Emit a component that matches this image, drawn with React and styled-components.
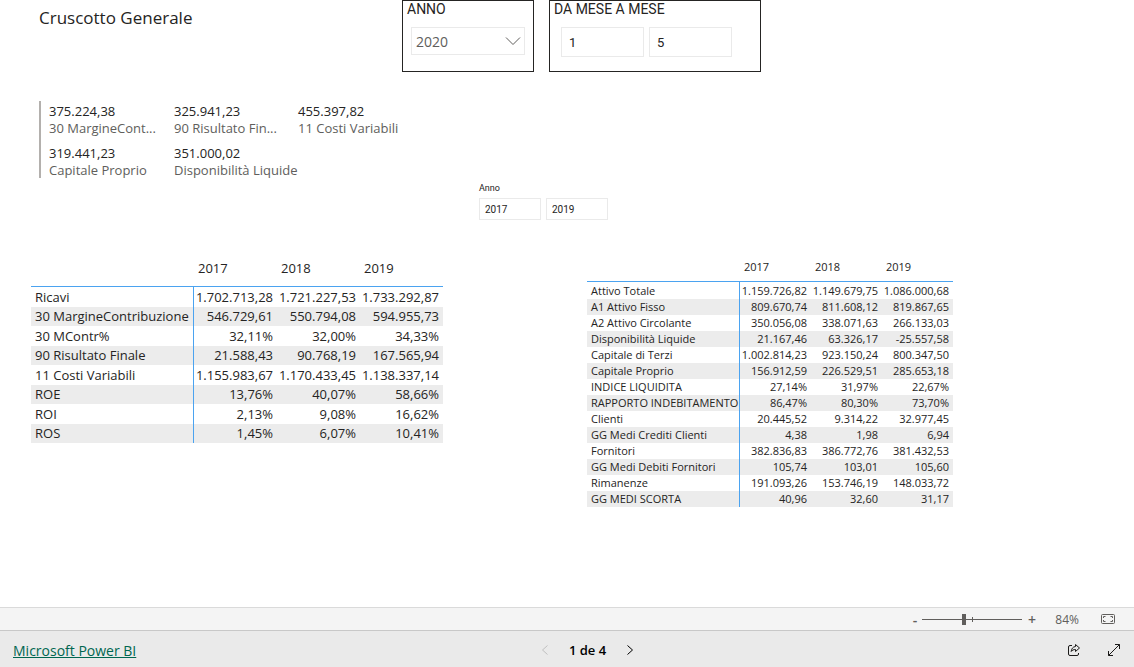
import React from 'react';
import styled, { createGlobalStyle } from 'styled-components';

const GlobalStyle = createGlobalStyle`
  * {
    box-sizing: border-box;
  }

  body {
    margin: 0;
    background: #fff;
    color: #252423;
    font-family: 'Open Sans', 'Noto Sans', sans-serif;
    font-size: 13px;
  }

  input,
  select,
  button {
    font: inherit;
    color: inherit;
  }
`;

const Page = styled.div`
  display: flex;
  flex-direction: column;
  min-height: 100vh;
`;

const Report = styled.main`
  flex: 1;
`;

const TopRow = styled.header`
  display: grid;
  grid-template-columns: 348px 132px 212px;
  column-gap: 15px;
  padding-left: 39px;
`;

const Title = styled.h1`
  margin: 0;
  padding-top: 6px;
  font-size: 17px;
  line-height: 24px;
  font-weight: 400;
`;

const FilterBox = styled.section`
  height: 72px;
  padding: 0 8px;
  border: 1px solid #252423;
`;

const FilterTitle = styled.h2`
  display: block;
  margin: 0 -4px;
  font-family: Roboto, sans-serif;
  font-size: 14px;
  line-height: 16px;
  font-weight: 400;
`;

const SelectWrap = styled.div`
  display: grid;
  align-items: center;
  margin-top: 10px;
  color: #605e5c;

  select,
  svg {
    grid-area: 1 / 1;
  }

  svg {
    justify-self: end;
    margin-right: 4px;
    pointer-events: none;
  }
`;

const Select = styled.select`
  appearance: none;
  width: 100%;
  height: 28px;
  padding: 0 4px;
  border: 1px solid #eaeaea;
  border-radius: 0;
  background: #fff;
  font-size: 14px;
`;

const RangeInputs = styled.div`
  display: flex;
  gap: 5px;
  padding: ${(p) => (p.$small ? '0' : '10px 3px 0')};
`;

const NumberBox = styled.input`
  width: ${(p) => (p.$small ? '62px' : '83px')};
  height: ${(p) => (p.$small ? '22px' : '30px')};
  padding: 0 ${(p) => (p.$small ? '5px' : '7px')};
  border: 1px solid #eaeaea;
  background: #fff;
  font-family: Roboto, sans-serif;
  font-size: ${(p) => (p.$small ? '10px' : '13px')};
`;

const MiddleRow = styled.div`
  display: grid;
  grid-template-columns: 440px auto;
  justify-content: start;
  padding: 29px 0 0 39px;
`;

const Cards = styled.dl`
  display: grid;
  grid-template-columns: 125px 124px 124px;
  grid-auto-rows: 42px;
  height: 77px;
  margin: 0;
  padding-left: 8px;
  border-left: 2px solid #b3b0ad;
`;

const Card = styled.div`
  display: flex;
  flex-direction: column-reverse;
  justify-content: flex-end;
  padding-top: 2px;
`;

const CardValue = styled.dd`
  margin: 0;
  line-height: 17px;
`;

const CardLabel = styled.dt`
  color: #605e5c;
  line-height: 16px;
  white-space: nowrap;
`;

const YearSlicer = styled.section`
  padding-top: 81px;
`;

const SlicerTitle = styled.h2`
  margin: 0 0 4px;
  font-family: Roboto, sans-serif;
  font-size: 9px;
  line-height: 12px;
  font-weight: 400;
`;

const Tables = styled.div`
  display: grid;
  grid-template-columns: auto auto;
  justify-content: start;
  align-items: start;
  gap: 30px 144px;
  padding: 30px 31px;
`;

const Matrix = styled.table`
  width: ${(p) => (p.$dense ? '366px' : '412px')};
  border-collapse: separate;
  border-spacing: 0;
  table-layout: fixed;
  font-size: ${(p) => (p.$dense ? '11px' : '13px')};
  white-space: nowrap;

  col:not(:first-child) {
    width: ${(p) => (p.$dense ? '71px' : '83px')};
  }

  th,
  td {
    padding: 0 4px;
    font-weight: 400;
    text-align: right;
    line-height: ${(p) => (p.$dense ? '16px' : '19px')};
  }

  td {
    padding-left: 0;
  }

  thead th {
    height: ${(p) => (p.$dense ? '32px' : '37px')};
    padding: ${(p) => (p.$dense ? '3px 4px 0' : '1px 4px 0')};
    border-bottom: 1px solid #4ba3f0;
    text-align: left;
  }

  tbody th {
    padding-right: 0;
    border-right: 1px solid #4ba3f0;
    text-align: left;
  }

  tbody tr:nth-child(odd) > * {
    line-height: ${(p) => (p.$dense ? '16px' : '20px')};
  }

  tbody tr:nth-child(even) > * {
    background: #ececec;
  }

  tbody tr:first-child > * {
    padding-top: ${(p) => (p.$dense ? '1px' : '0')};
  }
`;

const ZoomBar = styled.div`
  display: flex;
  align-items: center;
  justify-content: flex-end;
  height: 24px;
  padding-right: 16px;
  border-top: 1px solid #dadada;
  border-bottom: 1px solid #c8c8c8;
  background: #f4f4f4;
  color: #605e5c;
  font-size: 12px;
`;

const PlainButton = styled.button`
  display: flex;
  align-items: center;
  justify-content: center;
  width: ${(p) => p.$width || 20}px;
  height: 20px;
  padding: 0;
  border: 0;
  background: none;
  font-size: 14px;
  font-weight: 600;

  &:disabled {
    color: #c0c0c0;
  }
`;

const ZoomSlider = styled.input`
  appearance: none;
  width: 100px;
  height: 11px;
  margin: 0;
  background:
    linear-gradient(#605e5c, #605e5c) center / 1px 5px no-repeat,
    linear-gradient(#605e5c, #605e5c) center / 100% 1px no-repeat;

  &::-webkit-slider-thumb {
    appearance: none;
    width: 4px;
    height: 11px;
    background: #605e5c;
  }
`;

const ZoomValue = styled.span`
  width: 37px;
  margin-right: 19px;
  text-align: right;
`;

const Footer = styled.footer`
  display: grid;
  grid-template-columns: 1fr auto 1fr;
  align-items: center;
  height: 36px;
  padding: 2px 10px 0 13px;
  background: #eaeaea;
`;

const BrandLink = styled.a`
  justify-self: start;
  color: #006650;
  font-size: 14px;
`;

const Pager = styled.nav`
  display: flex;
  align-items: center;
  gap: 14px;
  padding-left: 38px;
  color: #000;
  font-size: 13px;
  font-weight: 600;
`;

const Actions = styled.div`
  display: flex;
  justify-content: flex-end;
  gap: 20px;
  color: #1b1a19;
`;

const cards = [
  ['375.224,38', '30 MargineCont...'],
  ['325.941,23', '90 Risultato Fin...'],
  ['455.397,82', '11 Costi Variabili'],
  ['319.441,23', 'Capitale Proprio'],
  ['351.000,02', 'Disponibilità Liquide'],
];

const years = ['2017', '2018', '2019'];

const income = [
  ['Ricavi', '1.702.713,28', '1.721.227,53', '1.733.292,87'],
  ['30 MargineContribuzione', '546.729,61', '550.794,08', '594.955,73'],
  ['30 MContr%', '32,11%', '32,00%', '34,33%'],
  ['90 Risultato Finale', '21.588,43', '90.768,19', '167.565,94'],
  ['11 Costi Variabili', '1.155.983,67', '1.170.433,45', '1.138.337,14'],
  ['ROE', '13,76%', '40,07%', '58,66%'],
  ['ROI', '2,13%', '9,08%', '16,62%'],
  ['ROS', '1,45%', '6,07%', '10,41%'],
];

const balance = [
  ['Attivo Totale', '1.159.726,82', '1.149.679,75', '1.086.000,68'],
  ['A1 Attivo Fisso', '809.670,74', '811.608,12', '819.867,65'],
  ['A2 Attivo Circolante', '350.056,08', '338.071,63', '266.133,03'],
  ['Disponibilità Liquide', '21.167,46', '63.326,17', '-25.557,58'],
  ['Capitale di Terzi', '1.002.814,23', '923.150,24', '800.347,50'],
  ['Capitale Proprio', '156.912,59', '226.529,51', '285.653,18'],
  ['INDICE LIQUIDITA', '27,14%', '31,97%', '22,67%'],
  ['RAPPORTO INDEBITAMENTO', '86,47%', '80,30%', '73,70%'],
  ['Clienti', '20.445,52', '9.314,22', '32.977,45'],
  ['GG Medi Crediti Clienti', '4,38', '1,98', '6,94'],
  ['Fornitori', '382.836,83', '386.772,76', '381.432,53'],
  ['GG Medi Debiti Fornitori', '105,74', '103,01', '105,60'],
  ['Rimanenze', '191.093,26', '153.746,19', '148.033,72'],
  ['GG MEDI SCORTA', '40,96', '32,60', '31,17'],
];

const Icon = ({ width = 14, height = 14, children }) => (
  <svg
    width={width}
    height={height}
    viewBox={`0 0 ${width} ${height}`}
    fill="none"
    stroke="currentColor"
    aria-hidden="true"
  >
    {children}
  </svg>
);

const DataMatrix = ({ rows, dense }) => (
  <Matrix $dense={dense}>
    <colgroup>
      <col />
      {years.map((year) => <col key={year} />)}
    </colgroup>
    <thead>
      <tr>
        <th aria-label="Voce" />
        {years.map((year) => <th key={year} scope="col">{year}</th>)}
      </tr>
    </thead>
    <tbody>
      {rows.map(([label, ...values]) => (
        <tr key={label}>
          <th scope="row">{label}</th>
          {values.map((value, i) => <td key={years[i]}>{value}</td>)}
        </tr>
      ))}
    </tbody>
  </Matrix>
);

export default function App() {
  return (
    <Page>
      <GlobalStyle />
      <Report>
        <TopRow>
          <Title>Cruscotto Generale</Title>
          <FilterBox>
            <FilterTitle as="label" htmlFor="anno">ANNO</FilterTitle>
            <SelectWrap>
              <Select id="anno" defaultValue="2020">
                <option>2020</option>
                <option>2019</option>
                <option>2018</option>
                <option>2017</option>
              </Select>
              <Icon width={16} height={10}><path d="M1 1.5 8 8.5 15 1.5" /></Icon>
            </SelectWrap>
          </FilterBox>
          <FilterBox>
            <FilterTitle>DA MESE A MESE</FilterTitle>
            <RangeInputs>
              <NumberBox aria-label="Da mese" defaultValue="1" />
              <NumberBox aria-label="A mese" defaultValue="5" />
            </RangeInputs>
          </FilterBox>
        </TopRow>

        <MiddleRow>
          <Cards>
            {cards.map(([value, label]) => (
              <Card key={label}>
                <CardLabel>{label}</CardLabel>
                <CardValue>{value}</CardValue>
              </Card>
            ))}
          </Cards>
          <YearSlicer>
            <SlicerTitle>Anno</SlicerTitle>
            <RangeInputs $small>
              <NumberBox $small aria-label="Anno iniziale" defaultValue="2017" />
              <NumberBox $small aria-label="Anno finale" defaultValue="2019" />
            </RangeInputs>
          </YearSlicer>
        </MiddleRow>

        <Tables>
          <DataMatrix rows={income} />
          <DataMatrix rows={balance} dense />
        </Tables>
      </Report>

      <ZoomBar>
        <PlainButton $width={14} aria-label="Zoom indietro">-</PlainButton>
        <ZoomSlider type="range" min="0" max="200" defaultValue="84" aria-label="Zoom" />
        <PlainButton aria-label="Zoom avanti">+</PlainButton>
        <ZoomValue>84%</ZoomValue>
        <PlainButton aria-label="Adatta alla pagina">
          <Icon width={14} height={10}>
            <rect x="0.5" y="0.5" width="13" height="9" rx="1" />
            <path d="M4.5 2.5h-2v1.5M9.5 2.5h2v1.5M2.5 6v1.5h2M11.5 6v1.5h-2" />
          </Icon>
        </PlainButton>
      </ZoomBar>

      <Footer>
        <BrandLink href="https://powerbi.microsoft.com">Microsoft Power BI</BrandLink>
        <Pager>
          <PlainButton disabled aria-label="Pagina precedente">
            <Icon width={8} height={12}><path d="M6.5 1.5 1.5 6l5 4.5" /></Icon>
          </PlainButton>
          <span>1 de 4</span>
          <PlainButton aria-label="Pagina successiva">
            <Icon width={8} height={12}><path d="M1.5 1.5 6.5 6l-5 4.5" /></Icon>
          </PlainButton>
        </Pager>
        <Actions>
          <PlainButton aria-label="Condividi">
            <Icon>
              <path d="M5 2.5H3A1.5 1.5 0 0 0 1.5 4v7A1.5 1.5 0 0 0 3 12.5h7a1.5 1.5 0 0 0 1.5-1.5v-1" />
              <path d="M8.5 1.5 12.5 5l-4 3.5v-2c-2 0-3.3.6-4.3 2 .2-2.800 1.700-4.700 4.300-5z" />
            </Icon>
          </PlainButton>
          <PlainButton aria-label="Schermo intero">
            <Icon>
              <path d="M1.5 12.5l11-11M8 1.5h4.5V6M1.5 8v4.5H6" />
            </Icon>
          </PlainButton>
        </Actions>
      </Footer>
    </Page>
  );
}
